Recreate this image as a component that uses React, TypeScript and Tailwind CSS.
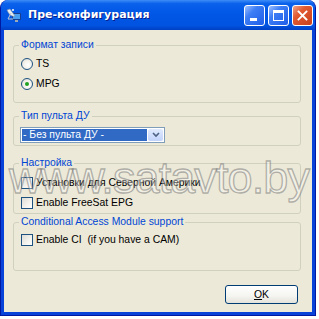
import { useState } from 'react'

function TitleIcon() {
    return (
        <svg width="16" height="16" viewBox="0 0 16 16" className="shrink-0">
            <rect x="6" y="6" width="9" height="7" rx="1" fill="#1b3f8f" />
            <rect x="7" y="7" width="7" height="5" fill="#4aa0f0" />
            <rect x="9" y="13" width="3" height="2" fill="#9aa8b8" />
            <path d="M1 3 C3 8 6 10 9 9 L4 2 Z" fill="#e8eef4" stroke="#8090a0" strokeWidth="0.6" />
            <path d="M5 6 L2 12 L7 12" stroke="#c0c8d0" strokeWidth="1" fill="none" />
            <circle cx="7" cy="3" r="1" fill="#ffffff" />
        </svg>
    )
}

function CaptionButton({ kind }: { kind: 'min' | 'max' | 'close' }) {
    const base = 'w-[21px] h-[21px] rounded-[3px] border border-white flex items-center justify-center'
    if (kind === 'close') {
        return (
            <div className={`${base} bg-[linear-gradient(135deg,#f0a48a_0%,#e15a32_35%,#c9411c_100%)]`}>
                <svg width="11" height="11" viewBox="0 0 11 11">
                    <path d="M1.5 1.5 L9.5 9.5 M9.5 1.5 L1.5 9.5" stroke="#ffffff" strokeWidth="1.8" strokeLinecap="square" />
                </svg>
            </div>
        )
    }
    return (
        <div className={`${base} bg-[linear-gradient(135deg,#9ec0ff_0%,#3d7df5_35%,#1f5ee8_100%)]`}>
            {kind === 'min' ? (
                <div className="w-[7px] h-[3px] bg-white mt-[8px] mr-[3px]" />
            ) : (
                <div className="w-[11px] h-[11px] border border-white border-t-[3px]" />
            )}
        </div>
    )
}

function GroupBox({ title, className, children }: { title: string; className: string; children?: React.ReactNode }) {
    return (
        <fieldset className={`border border-[#D0D0BF] rounded-[3px] pl-[7px] ${className}`}>
            <legend className="-ml-[2px] px-[2px] leading-[12px] text-[#0046D5]">{title}</legend>
            {children}
        </fieldset>
    )
}

function Radio({ label, checked, onClick }: { label: string; checked: boolean; onClick: () => void }) {
    return (
        <div className="h-[20px] flex items-center gap-[3px] cursor-default" onClick={onClick}>
            <div className="w-[12px] h-[12px] rounded-full border border-[#1C5180] bg-[radial-gradient(circle_at_60%_60%,#ffffff_0%,#f2f1ea_50%,#d6d5cc_100%)] flex items-center justify-center">
                {checked && <div className="w-[4px] h-[4px] rounded-full bg-[#21A121]" />}
            </div>
            <span className="text-black">{label}</span>
        </div>
    )
}

function Check({ label }: { label: string }) {
    const [on, setOn] = useState(false)
    return (
        <div className="h-[20px] flex items-center gap-[3px] cursor-default" onClick={() => setOn(!on)}>
            <div className="w-[12px] h-[12px] border border-[#1C5180] bg-[linear-gradient(135deg,#dcdbd5_0%,#f4f3ee_60%,#ffffff_100%)] flex items-center justify-center">
                {on && (
                    <svg width="8" height="8" viewBox="0 0 8 8">
                        <path d="M1 4 L3 6 L7 1" stroke="#21A121" strokeWidth="1.6" fill="none" />
                    </svg>
                )}
            </div>
            <span className="text-black whitespace-pre">{label}</span>
        </div>
    )
}

export default function App() {
    const [format, setFormat] = useState('MPG')

    return (
        <div className="relative w-[319px] h-[319px] bg-white font-['Liberation_Sans',sans-serif] text-[10.4px]">
            <div className="w-[316px] h-[316px] rounded-t-[8px] bg-[#0843D9] border border-[#0019A0] border-t-0 flex flex-col overflow-hidden">
                {/* title bar */}
                <div className="h-[30px] shrink-0 flex items-center pl-[5px] pr-[2px] bg-[linear-gradient(180deg,#3E8DF7_0%,#0A61EB_12%,#0157E6_45%,#0153E0_85%,#0040C4_100%)]">
                    <TitleIcon />
                    <span className="ml-[6px] text-white font-bold text-[11px] font-['DejaVu_Sans',sans-serif] [text-shadow:1px_1px_0_#0A1E8C]">Пре-конфигурация</span>
                    <div className="ml-auto flex gap-[3px]">
                        <CaptionButton kind="min" />
                        <CaptionButton kind="max" />
                        <CaptionButton kind="close" />
                    </div>
                </div>

                {/* client area */}
                <div className="flex-1 mx-[3px] mb-[3px] bg-[#ECE9D8] pt-[9px] pl-[9px] pr-[11px] flex flex-col">
                    <GroupBox title="Формат записи" className="h-[64px] pt-[3px]">
                        <Radio label="TS" checked={format === 'TS'} onClick={() => setFormat('TS')} />
                        <Radio label="MPG" checked={format === 'MPG'} onClick={() => setFormat('MPG')} />
                    </GroupBox>

                    <GroupBox title="Тип пульта ДУ" className="mt-[7px] h-[36px] pt-[5px]">
                        <div className="-ml-[1px] w-[145px] h-[16px] border border-[#7F9DB9] bg-white flex items-stretch p-[1px]">
                            <div className="flex-1 bg-[#316AC5] text-white flex items-center pl-[1px]">- Без пульта ДУ -</div>
                            <div className="w-[15px] ml-[1px] rounded-[2px] bg-[linear-gradient(180deg,#E0EAFE_0%,#C1D3FB_100%)] flex items-center justify-center">
                                <svg width="8" height="6" viewBox="0 0 8 6">
                                    <path d="M1 1 L4 4 L7 1" stroke="#4D6185" strokeWidth="1.6" fill="none" />
                                </svg>
                            </div>
                        </div>
                    </GroupBox>

                    <GroupBox title="Настройка" className="mt-[11px] h-[57px] pt-[4px]">
                        <Check label="Установки для Северной Америки" />
                        <Check label="Enable FreeSat EPG" />
                    </GroupBox>

                    <GroupBox title="Conditional Access Module support" className="mt-[2px] h-[55px] pt-[2px]">
                        <Check label="Enable CI  (if you have a CAM)" />
                    </GroupBox>

                    <div className="mt-[14px] flex justify-end pr-[3px]">
                        <button className="w-[73px] h-[19px] rounded-[3px] border border-[#003C74] bg-[linear-gradient(180deg,#FFFFFF_0%,#F4F4F0_60%,#E3E2DA_100%)] text-black flex items-center justify-center">
                            <span><span className="underline">O</span>K</span>
                        </button>
                    </div>
                </div>
            </div>

            {/* watermark */}
            <div className="pointer-events-none absolute left-[9px] top-[155px] font-['Liberation_Sans',sans-serif] text-[45px] leading-[45px] tracking-[-0.9px] text-[rgba(255,255,255,0.35)] [-webkit-text-stroke:1.3px_rgba(110,110,110,0.5)] whitespace-nowrap">
                www.satavto.by
            </div>
        </div>
    )
}
